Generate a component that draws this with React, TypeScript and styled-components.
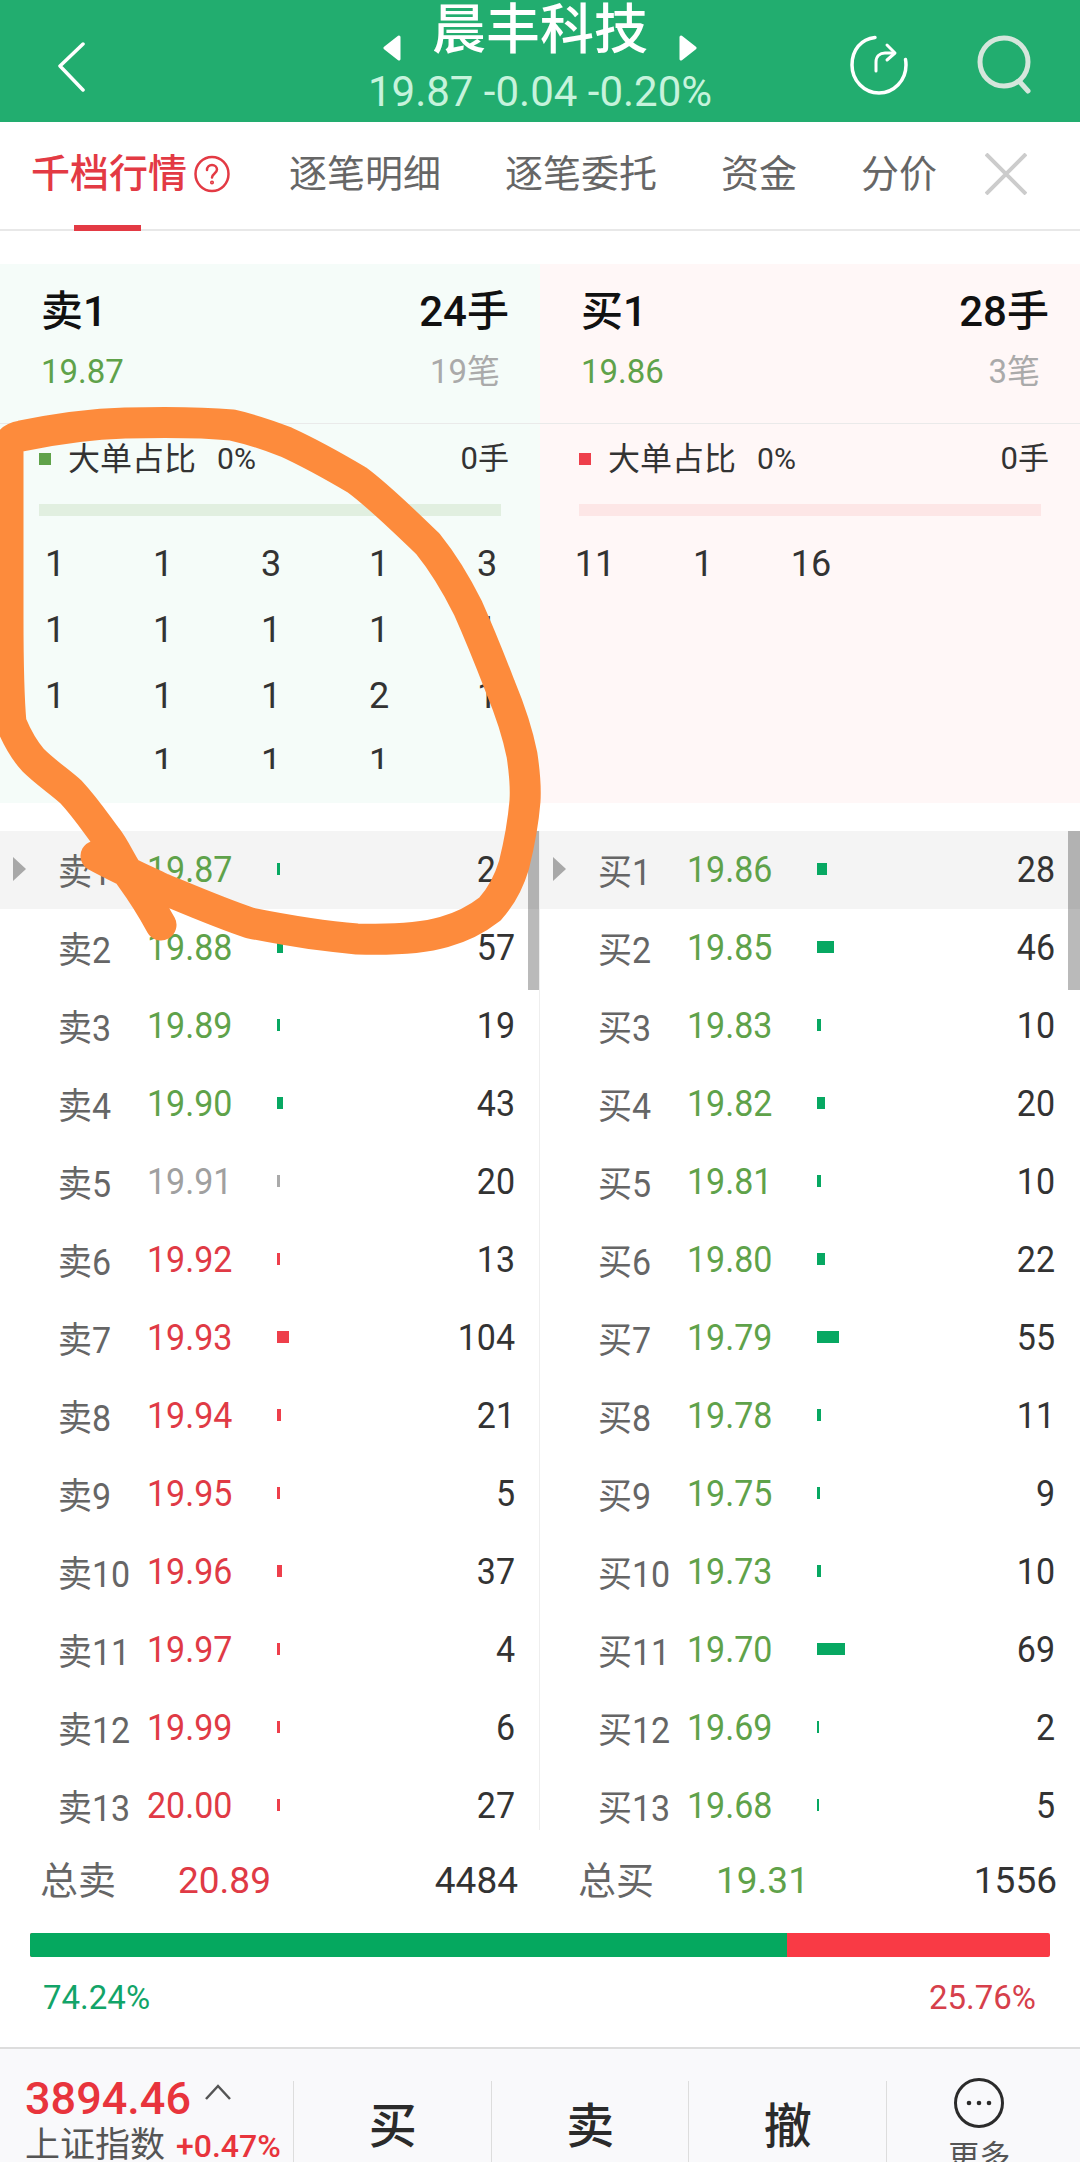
import React from 'react';
import styled, { createGlobalStyle } from 'styled-components';

const RED = '#e03a45';
const GREEN = '#5fa24a';
const GREY = '#a0a0a0';

type Tone = 'up' | 'down' | 'flat';

const toneColor = (tone: Tone) => (tone === 'up' ? RED : tone === 'down' ? GREEN : GREY);
const barColor = (tone: Tone) => (tone === 'up' ? '#ee3f4b' : tone === 'down' ? '#07a862' : '#aaaaaa');

interface Level {
  label: string;
  price: string;
  tone: Tone;
  bar: number;
  qty: string;
}

const sellLevels: Level[] = [
  { label: '卖1', price: '19.87', tone: 'down', bar: 3, qty: '24' },
  { label: '卖2', price: '19.88', tone: 'down', bar: 6, qty: '57' },
  { label: '卖3', price: '19.89', tone: 'down', bar: 3, qty: '19' },
  { label: '卖4', price: '19.90', tone: 'down', bar: 6, qty: '43' },
  { label: '卖5', price: '19.91', tone: 'flat', bar: 3, qty: '20' },
  { label: '卖6', price: '19.92', tone: 'up', bar: 3, qty: '13' },
  { label: '卖7', price: '19.93', tone: 'up', bar: 12, qty: '104' },
  { label: '卖8', price: '19.94', tone: 'up', bar: 4, qty: '21' },
  { label: '卖9', price: '19.95', tone: 'up', bar: 3, qty: '5' },
  { label: '卖10', price: '19.96', tone: 'up', bar: 5, qty: '37' },
  { label: '卖11', price: '19.97', tone: 'up', bar: 3, qty: '4' },
  { label: '卖12', price: '19.99', tone: 'up', bar: 3, qty: '6' },
  { label: '卖13', price: '20.00', tone: 'up', bar: 3, qty: '27' },
];

const buyLevels: Level[] = [
  { label: '买1', price: '19.86', tone: 'down', bar: 10, qty: '28' },
  { label: '买2', price: '19.85', tone: 'down', bar: 17, qty: '46' },
  { label: '买3', price: '19.83', tone: 'down', bar: 4, qty: '10' },
  { label: '买4', price: '19.82', tone: 'down', bar: 8, qty: '20' },
  { label: '买5', price: '19.81', tone: 'down', bar: 4, qty: '10' },
  { label: '买6', price: '19.80', tone: 'down', bar: 8, qty: '22' },
  { label: '买7', price: '19.79', tone: 'down', bar: 22, qty: '55' },
  { label: '买8', price: '19.78', tone: 'down', bar: 4, qty: '11' },
  { label: '买9', price: '19.75', tone: 'down', bar: 3, qty: '9' },
  { label: '买10', price: '19.73', tone: 'down', bar: 4, qty: '10' },
  { label: '买11', price: '19.70', tone: 'down', bar: 28, qty: '69' },
  { label: '买12', price: '19.69', tone: 'down', bar: 2, qty: '2' },
  { label: '买13', price: '19.68', tone: 'down', bar: 2, qty: '5' },
];

const GlobalStyle = createGlobalStyle`
  html, body {
    margin: 0;
    padding: 0;
    background: #fff;
  }
  body {
    font-family: Roboto, "Noto Sans CJK SC", sans-serif;
  }
`;

const Page = styled.div`
  position: relative;
  width: 1080px;
  height: 2162px;
  overflow: hidden;
  background: #fff;
`;

const Header = styled.header`
  height: 122px;
  display: grid;
  grid-template-columns: 1fr auto 1fr;
  background: #22ad6f;
`;

const BackSlot = styled.div`
  padding: 42px 0 0 56px;
`;

const TitleBlock = styled.div`
  display: flex;
  flex-direction: column;
  align-items: center;
`;

const TitleRow = styled.div`
  display: flex;
  align-items: flex-start;
  gap: 30px;
  height: 62px;
`;

const Title = styled.h1`
  margin: 0;
  font-size: 54px;
  line-height: 62px;
  font-weight: 500;
  color: #fff;
`;

const TriangleSlot = styled.div`
  display: flex;
  margin-top: 35px;
`;

const Quote = styled.div`
  margin-top: 8px;
  font-size: 42px;
  line-height: 44px;
  color: #c6f3dc;
`;

const HeaderActions = styled.div`
  display: flex;
  justify-content: flex-end;
  gap: 66px;
  padding: 34px 47px 0 0;
  align-items: flex-start;
`;

const Tabs = styled.nav`
  height: 109px;
  box-sizing: border-box;
  display: flex;
  align-items: center;
  gap: 64px;
  padding: 0 0 4px 31px;
  border-bottom: 2px solid #e8e8e8;
`;

const Tab = styled.div<{ $active?: boolean }>`
  position: relative;
  font-size: ${({ $active }) => ($active ? 39 : 38)}px;
  line-height: 108px;
  color: ${({ $active }) => ($active ? '#e33a44' : '#666')};
  font-weight: ${({ $active }) => ($active ? 500 : 400)};
  white-space: nowrap;

  ${({ $active }) =>
    $active &&
    `&::after {
      content: '';
      position: absolute;
      left: 43px;
      bottom: -3px;
      width: 67px;
      height: 6px;
      background: #e33a44;
    }`}
`;

const ActiveTab = styled.div`
  display: flex;
  align-items: center;
  gap: 7px;
  margin-right: -5px;
`;

const CloseSlot = styled.div`
  display: flex;
  margin-left: -16px;
`;

const Depth = styled.section`
  margin-top: 33px;
  height: 539px;
  display: grid;
  grid-template-columns: 540px 540px;
`;

const DepthSide = styled.div<{ $bg: string }>`
  background: ${({ $bg }) => $bg};
`;

const SideHead = styled.div`
  padding: 24px 31px 0 41px;
`;

const HeadLine = styled.div`
  display: flex;
  justify-content: space-between;
  align-items: center;
  font-size: 42px;
  line-height: 48px;
  font-weight: 500;
  color: #111;
`;

const SubLine = styled.div`
  display: flex;
  justify-content: space-between;
  align-items: center;
  margin-top: 16px;
  padding-right: 9px;
  height: 40px;
  font-size: 33px;
  line-height: 40px;
`;

const PriceText = styled.span<{ $tone: Tone }>`
  color: ${({ $tone }) => toneColor($tone)};
`;

const Muted = styled.span`
  color: #aaa;
`;

const Divider = styled.div`
  margin-top: 31px;
  height: 1px;
  background: #eaeaea;
`;

const Legend = styled.div`
  display: flex;
  align-items: center;
  margin-top: 15px;
  padding: 0 31px 0 39px;
  height: 40px;
  font-size: 32px;
  line-height: 40px;
  color: #333;
`;

const LegendMark = styled.i<{ $color: string }>`
  width: 12px;
  height: 12px;
  margin-right: 17px;
  background: ${({ $color }) => $color};
`;

const LegendPct = styled.span`
  margin-left: 21px;
  font-size: 30px;
  margin-right: auto;
`;

const LegendQty = styled.span`
  font-size: 31px;
`;

const RatioTrack = styled.div<{ $color: string }>`
  margin: 25px 39px 0;
  height: 12px;
  background: ${({ $color }) => $color};
`;

const Orders = styled.div`
  margin-top: 15px;
  padding-left: 1px;
  height: 238px;
  overflow: hidden;
  display: grid;
  grid-template-columns: repeat(5, 108px);
  grid-auto-rows: 66px;
  align-items: center;
  text-align: center;
  font-size: 36px;
  line-height: 66px;
  color: #333;
`;

const Levels = styled.section`
  margin-top: 28px;
  height: 999px;
  overflow: hidden;
  display: grid;
  grid-template-columns: 540px 540px;
`;

const LevelColumn = styled.div<{ $divided?: boolean }>`
  position: relative;
  ${({ $divided }) => $divided && 'box-shadow: -1px 0 0 #eeeeee;'}
`;

const Row = styled.div<{ $active?: boolean }>`
  height: 78px;
  box-sizing: border-box;
  display: flex;
  align-items: center;
  padding: 0 25px 2px 0;
  background: ${({ $active }) => ($active ? '#f4f4f4' : 'transparent')};
`;

const Marker = styled.div<{ $show?: boolean }>`
  width: 13px;
  height: 24px;
  margin: 0 32px 0 13px;
  flex: none;
  background: ${({ $show }) => ($show ? '#a8a8a8' : 'transparent')};
  clip-path: polygon(0 0, 100% 50%, 0 100%);
`;

const LevelLabel = styled.div`
  width: 90px;
  flex: none;
  font-size: 34px;
  color: #666;
  white-space: nowrap;
  transform: scaleY(1.06);
`;

const LevelPrice = styled.div<{ $tone: Tone }>`
  width: 130px;
  margin-left: -1px;
  flex: none;
  font-size: 34px;
  color: ${({ $tone }) => toneColor($tone)};
  transform: scaleY(1.08);
`;

const DepthBar = styled.i<{ $tone: Tone }>`
  display: block;
  height: 12px;
  background: ${({ $tone }) => barColor($tone)};
`;

const LevelQty = styled.div`
  margin-left: auto;
  font-size: 34px;
  color: #333;
  transform: scaleY(1.08);
`;

const ScrollThumb = styled.div`
  position: absolute;
  top: 0;
  right: 0;
  width: 12px;
  height: 159px;
  background: rgba(0, 0, 0, 0.27);
`;

const Totals = styled.section`
  margin-top: 22px;
  height: 58px;
  display: grid;
  grid-template-columns: 578px 1fr;
`;

const TotalSide = styled.div<{ $pad: string }>`
  display: flex;
  align-items: center;
  padding: ${({ $pad }) => $pad};
  font-size: 37px;
  line-height: 58px;
  color: #333;
`;

const TotalLabel = styled.span`
  width: 138px;
  font-size: 38px;
  color: #666;
`;

const TotalPrice = styled.span<{ $tone: Tone }>`
  margin-right: auto;
  color: ${({ $tone }) => toneColor($tone)};
`;

const Ratio = styled.div`
  display: flex;
  margin: 23px 30px 0;
  height: 24px;
  border-radius: 2px;
  overflow: hidden;
  background: #f93a45;
`;

const RatioFill = styled.div`
  background: #05a85f;
`;

const RatioText = styled.div`
  display: flex;
  justify-content: space-between;
  margin-top: 21px;
  padding: 0 44px 0 43px;
  font-size: 33px;
  line-height: 40px;
`;

const Percent = styled.span<{ $color: string }>`
  color: ${({ $color }) => $color};
`;

const Footer = styled.footer`
  margin-top: 29px;
  height: 115px;
  box-sizing: border-box;
  display: grid;
  grid-template-columns: 294px repeat(4, 197.5px);
  background: #f9f9fb;
  border-top: 2px solid #dddddd;
`;

const IndexBlock = styled.div`
  padding: 25px 0 0 25px;
`;

const IndexTop = styled.div`
  display: flex;
  align-items: flex-start;
  font-size: 45px;
  line-height: 50px;
  font-weight: 500;
  color: #e8343c;
`;

const IndexCaret = styled.div`
  margin: 10px 0 0 14px;
  display: flex;
`;

const IndexBottom = styled.div`
  display: flex;
  align-items: baseline;
  white-space: nowrap;
  font-size: 35px;
  line-height: 44px;
  color: #555;
`;

const IndexChange = styled.span`
  margin-left: 11px;
  font-size: 32px;
  font-weight: 500;
  color: #e8343c;
`;

const Action = styled.div`
  margin-top: 32px;
  margin-left: -1px;
  border-left: 1px solid #dddddd;
  display: flex;
  align-items: center;
  justify-content: center;
  height: 81px;
  font-size: 48px;
  font-weight: 500;
  color: #2b2b2b;
`;

const MoreAction = styled.div`
  margin-top: 32px;
  margin-left: -1px;
  border-left: 1px solid #dddddd;
  display: flex;
  flex-direction: column;
  align-items: center;
  padding-right: 12px;
  height: 81px;
`;

const MoreIcon = styled.div`
  display: flex;
  margin-top: -4px;
`;

const MoreText = styled.div`
  margin-top: 8px;
  font-size: 31px;
  line-height: 40px;
  color: #555;
`;

const Scribble = styled.svg`
  position: absolute;
  left: 0;
  top: 0;
  pointer-events: none;
`;

const BackIcon = () => (
  <svg width="32" height="50" viewBox="0 0 32 50" fill="none">
    <path d="M27 2 4 24l23 24" stroke="#fff" strokeWidth="3.5" strokeLinecap="round" strokeLinejoin="round" />
  </svg>
);

const Triangle = ({ flip }: { flip?: boolean }) => (
  <svg width="20" height="26" viewBox="0 0 20 26" style={flip ? { transform: 'scaleX(-1)' } : undefined}>
    <path d="M17 2 3 13l14 11z" fill="#fff" stroke="#fff" strokeWidth="3" strokeLinejoin="round" />
  </svg>
);

const ShareIcon = () => (
  <svg width="60" height="62" viewBox="0 0 60 62" fill="none" stroke="#fff" strokeWidth="3.5" strokeLinecap="round" strokeLinejoin="round">
    <path d="M26 3.5C12 5 3 16 3 31c0 15.5 12 28 27 28s27-12.500 27-28c0-2-.2-4-.5-5.500" />
    <path d="M27 37V28c0-6 4-9 9-9h9" strokeWidth="3" />
    <path d="m38 11 8 8-8 7" strokeWidth="3" />
  </svg>
);

const SearchIcon = () => (
  <svg width="58" height="60" viewBox="0 0 58 60" fill="none" stroke="#d5e6dc" strokeWidth="5" strokeLinecap="round">
    <circle cx="29" cy="28" r="24" />
    <path d="m44 47 9 10" />
  </svg>
);

const HelpIcon = () => (
  <svg width="36" height="38" viewBox="0 0 36 38" fill="none" stroke="#e33a44" strokeWidth="2.500" strokeLinecap="round">
    <ellipse cx="18" cy="19" rx="16.500" ry="17" />
    <path d="M13 15c0-3 2.200-5 5-5s5 2 5 4.600c0 3.800-5 4-5 8" />
    <circle cx="18" cy="27.500" r="0.800" />
  </svg>
);

const CloseIcon = () => (
  <svg width="42" height="42" viewBox="0 0 42 42" fill="none" stroke="#cccccc" strokeWidth="4">
    <path d="m1 1 40 40M41 1 1 41" />
  </svg>
);

const CaretIcon = () => (
  <svg width="26" height="16" viewBox="0 0 26 16" fill="none" stroke="#555" strokeWidth="2.500">
    <path d="m1 15 12-13 12 13" />
  </svg>
);

const MoreGlyph = () => (
  <svg width="52" height="52" viewBox="0 0 52 52" fill="none">
    <circle cx="26" cy="26" r="23.500" stroke="#2b2b2b" strokeWidth="3" />
    <circle cx="16" cy="26" r="2.300" fill="#2b2b2b" />
    <circle cx="26" cy="26" r="2.300" fill="#2b2b2b" />
    <circle cx="36" cy="26" r="2.300" fill="#2b2b2b" />
  </svg>
);

interface SideProps {
  bg: string;
  title: string;
  hands: string;
  price: string;
  count: string;
  mark: string;
  track: string;
  orders: string[];
}

const Side: React.FC<SideProps> = ({ bg, title, hands, price, count, mark, track, orders }) => (
  <DepthSide $bg={bg}>
    <SideHead>
      <HeadLine>
        <span>{title}</span>
        <span>{hands}</span>
      </HeadLine>
      <SubLine>
        <PriceText $tone="down">{price}</PriceText>
        <Muted>{count}</Muted>
      </SubLine>
    </SideHead>
    <Divider />
    <Legend>
      <LegendMark $color={mark} />
      大单占比
      <LegendPct>0%</LegendPct>
      <LegendQty>0手</LegendQty>
    </Legend>
    <RatioTrack $color={track} />
    <Orders>
      {orders.map((order, index) => (
        <span key={index}>{order}</span>
      ))}
    </Orders>
  </DepthSide>
);

const LevelList: React.FC<{ levels: Level[]; divided?: boolean }> = ({ levels, divided }) => (
  <LevelColumn $divided={divided}>
    {levels.map((level, index) => (
      <Row key={level.label} $active={index === 0}>
        <Marker $show={index === 0} />
        <LevelLabel>{level.label}</LevelLabel>
        <LevelPrice $tone={level.tone}>{level.price}</LevelPrice>
        <DepthBar $tone={level.tone} style={{ width: level.bar }} />
        <LevelQty>{level.qty}</LevelQty>
      </Row>
    ))}
    <ScrollThumb />
  </LevelColumn>
);

const App: React.FC = () => (
  <Page>
    <GlobalStyle />
    <Header>
      <BackSlot>
        <BackIcon />
      </BackSlot>
      <TitleBlock>
        <TitleRow>
          <TriangleSlot>
            <Triangle />
          </TriangleSlot>
          <Title>晨丰科技</Title>
          <TriangleSlot>
            <Triangle flip />
          </TriangleSlot>
        </TitleRow>
        <Quote>19.87 -0.04 -0.20%</Quote>
      </TitleBlock>
      <HeaderActions>
        <ShareIcon />
        <SearchIcon />
      </HeaderActions>
    </Header>

    <Tabs>
      <ActiveTab>
        <Tab $active>千档行情</Tab>
        <HelpIcon />
      </ActiveTab>
      <Tab>逐笔明细</Tab>
      <Tab>逐笔委托</Tab>
      <Tab>资金</Tab>
      <Tab>分价</Tab>
      <CloseSlot>
        <CloseIcon />
      </CloseSlot>
    </Tabs>

    <Depth>
      <Side
        bg="#f5fcf9"
        title="卖1"
        hands="24手"
        price="19.87"
        count="19笔"
        mark="#5fa24a"
        track="#e1efe0"
        orders={['1', '1', '3', '1', '3', '1', '1', '1', '1', '1', '1', '1', '1', '2', '1', '', '1', '1', '1', '']}
      />
      <Side
        bg="#fff7f7"
        title="买1"
        hands="28手"
        price="19.86"
        count="3笔"
        mark="#ee3f4b"
        track="#fde6e6"
        orders={['11', '1', '16']}
      />
    </Depth>

    <Levels>
      <LevelList levels={sellLevels} />
      <LevelList levels={buyLevels} divided />
    </Levels>

    <Totals>
      <TotalSide $pad="0 60px 0 40px">
        <TotalLabel>总卖</TotalLabel>
        <TotalPrice $tone="up">20.89</TotalPrice>
        4484
      </TotalSide>
      <TotalSide $pad="0 23px 0 0">
        <TotalLabel>总买</TotalLabel>
        <TotalPrice $tone="down">19.31</TotalPrice>
        1556
      </TotalSide>
    </Totals>

    <Ratio>
      <RatioFill style={{ width: '74.24%' }} />
    </Ratio>
    <RatioText>
      <Percent $color="#12a468">74.24%</Percent>
      <Percent $color="#d6404b">25.76%</Percent>
    </RatioText>

    <Footer>
      <IndexBlock>
        <IndexTop>
          3894.46
          <IndexCaret>
            <CaretIcon />
          </IndexCaret>
        </IndexTop>
        <IndexBottom>
          上证指数
          <IndexChange>+0.47%</IndexChange>
        </IndexBottom>
      </IndexBlock>
      <Action>买</Action>
      <Action>卖</Action>
      <Action>撤</Action>
      <MoreAction>
        <MoreIcon>
          <MoreGlyph />
        </MoreIcon>
        <MoreText>更多</MoreText>
      </MoreAction>
    </Footer>

    <Scribble width="1080" height="2162" viewBox="0 0 1080 2162" fill="none">
      <path
        d="M161 925C150 905 140 890 132 879C122 865 115 848 107 838C95 822 85 807 71 792C60 782 45 772 33 760C24 750 16 735 11 723C8 690 8 650 8 617L8 447C10 440 14 437 21 436C60 428 90 424 125 423C165 422 200 422 232 425C250 429 268 435 286 442C310 453 335 467 357 480C380 497 405 522 428 544C445 565 458 588 468 608C480 635 490 660 500 686C510 710 518 735 522 755C525 775 526 785 525 801C523 825 519 845 514 865C508 885 500 898 490 909C476 920 462 927 444 932C420 939 390 940 357 939C320 936 285 930 250 923C220 913 190 900 161 888C140 878 118 868 96 856"
        stroke="#fd8b3c"
        strokeWidth="31"
        strokeLinecap="round"
        strokeLinejoin="round"
      />
    </Scribble>
  </Page>
);

export default App;
